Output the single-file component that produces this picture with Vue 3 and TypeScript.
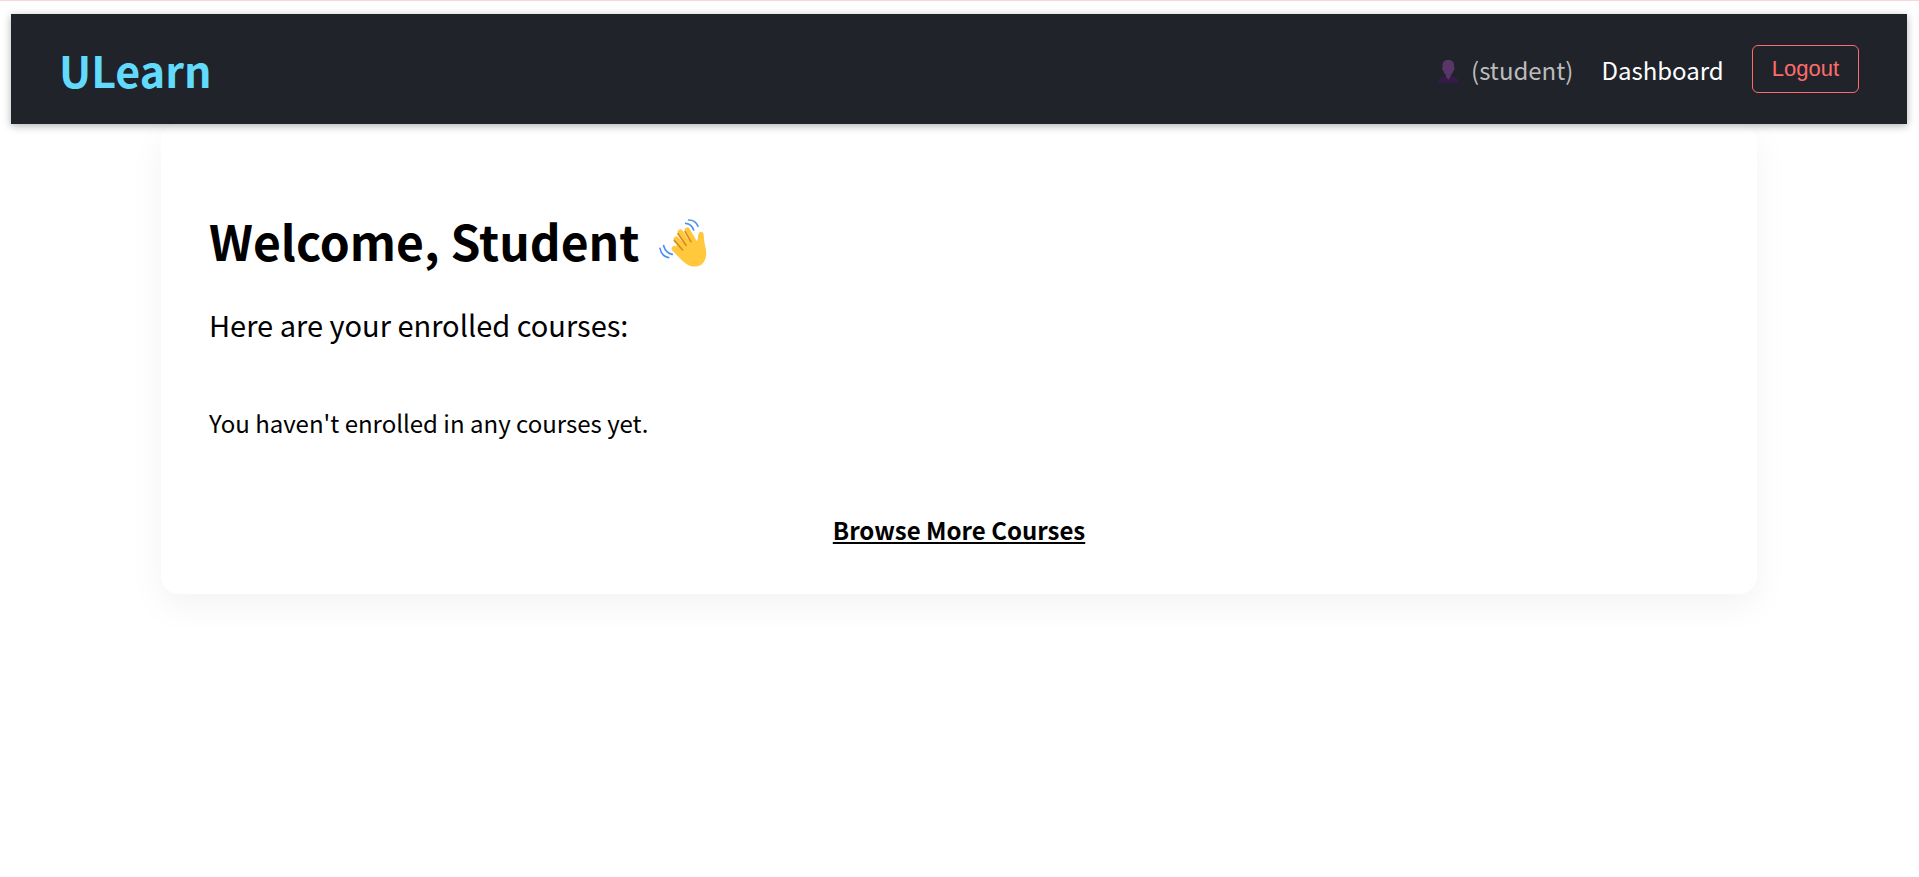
<script setup lang="ts">
const role: string = 'student'
const enrolled: string[] = []

function logout(): void {
  window.location.hash = ''
}
</script>

<template>
  <div class="page">
    <header class="navbar">
      <a class="brand" href="#home">ULearn</a>
      <nav class="links">
        <span class="user">
          <svg class="user-icon" viewBox="0 0 72 84" aria-hidden="true">
            <path d="M2 83C4 71 10 66 23 63L34 73L45 63C58 66 64 71 66 83Z" fill="#381a4a" />
            <path d="M34 15C21 15 15 23 17 36C14 38 15 46 19 47C21 54 24 58 27 61V65L34 74L41 65V61C44 58 47 54 49 47C53 46 54 38 51 36C53 23 47 15 34 15Z" fill="#593668" />
          </svg>
          <span>({{ role }})</span>
        </span>
        <a class="link" href="#dashboard">Dashboard</a>
        <button class="logout" type="button" @click="logout">Logout</button>
      </nav>
    </header>

    <main class="card">
      <h1 class="title">
        <span>Welcome, Student</span>
        <svg class="wave" viewBox="24 24 150 150" role="img" aria-label="Waving hand">
          <g fill="none" stroke="#4a90f5" stroke-width="5" stroke-linecap="round">
            <path d="M116 30Q137 30 144 49" />
            <path d="M107 40Q125 42 131 60" />
            <path d="M30 115Q35 139 56 143" />
            <path d="M41 107Q47 129 67 133" />
          </g>
          <g fill="none" stroke="#ffc83d" stroke-width="16" stroke-linecap="round">
            <path d="M112 60L136 102" />
            <path d="M91 66L122 112" />
            <path d="M79 87L112 124" />
            <path d="M73 116L100 142" />
            <path d="M153 74L148 106" />
          </g>
          <path d="M67 121L84 103L108 88L128 86Q136 98 144 90L161 76Q162 96 167 115C172 138 166 164 142 169C121 173 104 160 92 147Z" fill="#ffc83d" />
          <path d="M105 65L123 95M84 71L108 106M73 92L98 120" fill="none" stroke="#d88a1c" stroke-width="5" stroke-linecap="round" />
        </svg>
      </h1>
      <p class="lead">Here are your enrolled courses:</p>
      <p v-if="enrolled.length === 0" class="empty">You haven't enrolled in any courses yet.</p>
      <div class="more">
        <a class="browse" href="#courses">Browse More Courses</a>
      </div>
    </main>
  </div>
</template>

<style>
body {
  background: #fff;
}
</style>

<style scoped>
.page {
  padding: 13px 12px 32px 11px;
  border-top: 1px solid #f8d7da;
  font-family: "Noto Sans CJK SC", "Noto Sans", sans-serif;
  font-size: 24px;
  color: #000;
}

.navbar {
  position: relative;
  z-index: 1;
  display: flex;
  align-items: center;
  justify-content: space-between;
  box-sizing: border-box;
  min-height: 110px;
  padding: 0 48px;
  background: #20232a;
  box-shadow: 0 2px 8px rgba(0, 0, 0, 0.3);
}

.brand {
  color: #61dafb;
  font-size: 43px;
  font-weight: 700;
  text-decoration: none;
}

.links {
  display: flex;
  align-items: center;
  gap: 28px;
}

.user {
  display: flex;
  align-items: center;
  gap: 10px;
  color: #bbb;
}

.user-icon {
  width: 24px;
  height: 28px;
}

.link {
  color: #fff;
  text-decoration: none;
}

.logout {
  height: 48px;
  padding: 0 19px;
  border: 1px solid #ff6b6b;
  border-radius: 6px;
  background: transparent;
  color: #ff6b6b;
  font-family: "Liberation Sans", Arial, sans-serif;
  font-size: 22px;
  line-height: 46px;
  cursor: pointer;
}

.card {
  margin: 0 150px;
  padding: 82px 48px 46px;
  border-radius: 18px;
  background: #fff;
  box-shadow: 0 12px 36px rgba(0, 0, 0, 0.05);
}

.title {
  display: flex;
  align-items: center;
  gap: 18px;
  margin: 0;
  font-size: 48px;
  font-weight: 700;
  line-height: 68px;
}

.wave {
  width: 50px;
  height: 50px;
  margin-top: 6px;
}

.lead {
  margin: 28px 0 0;
  font-size: 29px;
  line-height: 44px;
}

.empty {
  margin: 59px 0 0;
  line-height: 36px;
}

.more {
  margin-top: 71px;
  line-height: 36px;
  text-align: center;
}

.browse {
  color: #000;
  font-weight: 700;
}
</style>
